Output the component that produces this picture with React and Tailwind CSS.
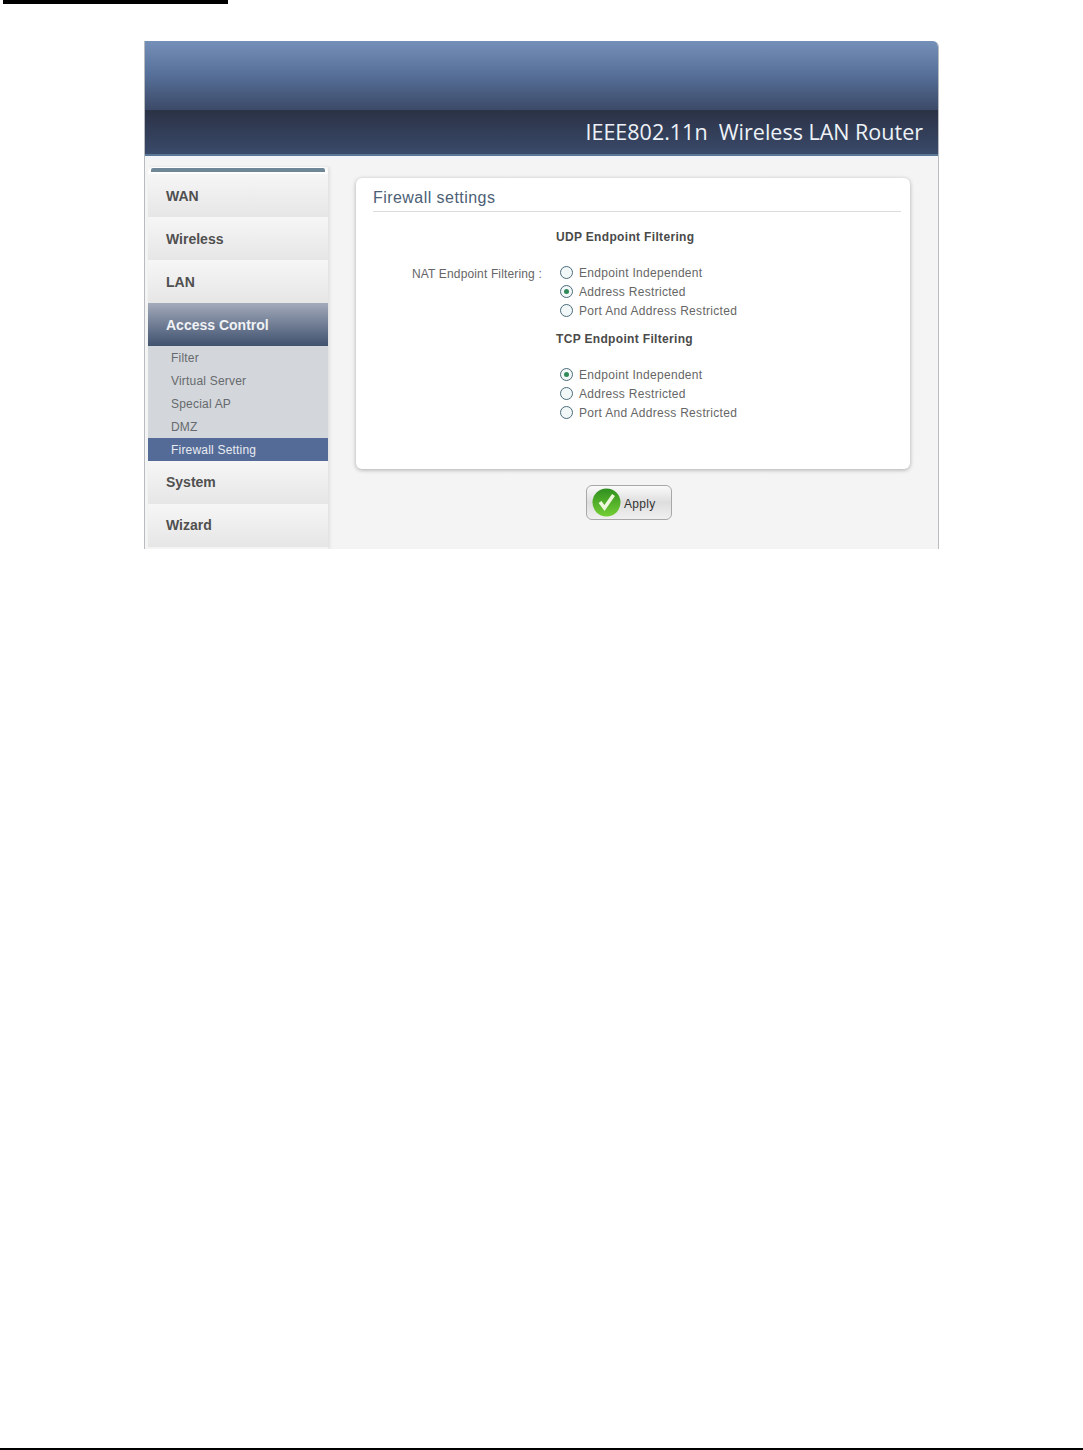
const font = { fontFamily: "Arial" };

const NavItem = ({ label, low }) => (
  <div
    className={
      low
        ? "h-[43px] flex items-center pl-[18px] pt-[1px] bg-gradient-to-b from-[#f6f6f6] to-[#e6e6e6] text-[14px] font-bold text-[#505050]"
        : "h-[43px] flex items-center pl-[18px] bg-gradient-to-b from-[#f6f6f6] to-[#e6e6e6] text-[14px] font-bold text-[#505050]"
    }
  >
    {label}
  </div>
);

const SubItem = ({ label, active }) => (
  <div
    className={
      active
        ? "h-[23px] flex items-center pl-[23px] bg-[#546b98] text-[12px] tracking-[0.2px] text-[#e8ebf0]"
        : "h-[23px] flex items-center pl-[23px] text-[12px] tracking-[0.2px] text-[#666a6e]"
    }
  >
    {label}
  </div>
);

const Radio = ({ label, checked }) => (
  <div className="h-[19px] flex items-center pl-[4px] gap-[6px]">
    <span className="w-[13px] h-[13px] rounded-full border border-[#4a6a7a] bg-[#f2f8f8] flex items-center justify-center">
      {checked && <span className="w-[5px] h-[5px] rounded-full bg-[#2f8a5a]" />}
    </span>
    <span className="text-[12px] tracking-[0.3px] text-[#666]">{label}</span>
  </div>
);

const Group = ({ title, options }) => (
  <div>
    <div className="h-[17px] flex items-center text-[12px] font-bold tracking-[0.33px] text-[#4a4a4a]">{title}</div>
    <div className="mt-[18px]">
      {options.map((o) => (
        <Radio key={o.label} label={o.label} checked={o.checked} />
      ))}
    </div>
  </div>
);

export default function App() {
  return (
    <div className="w-[1083px] h-[1450px] bg-white flex flex-col" style={font}>
      <div className="ml-[3px] w-[225px] h-[4px] bg-black" />

      <div className="ml-[144px] mt-[37px] w-[795px] h-[508px] flex flex-col border-x border-[#b8bcc0] rounded-tr-[6px] overflow-hidden">
        <div className="h-[115px] shrink-0 flex flex-col">
          <div className="h-[69px] bg-gradient-to-b from-[#7590b8] via-[#566f98] to-[#3c4a68]" />
          <div className="h-[46px] flex items-center justify-end pr-[15px] bg-gradient-to-b from-[#2b3246] to-[#3a4a6a] border-b-2 border-[#5a7896] text-[21.5px] text-[#eef2f6]" style={{ fontFamily: "'Open Sans', sans-serif" }}>
            IEEE802.11n&nbsp; Wireless LAN Router
          </div>
        </div>

        <div className="flex-1 flex bg-gradient-to-b from-[#f0f4f8] to-[#f4f4f4] to-[4px] pl-[3px]">
          <div className="w-[180px] mt-[11px] shrink-0 flex flex-col shadow-[2px_0_3px_rgba(0,0,0,0.08)]">
            <div className="h-[7px] bg-white pt-[1px] px-[3px] rounded-t-[6px]">
              <div className="h-[4px] bg-[#6f8796] rounded-t-[2px]" />
            </div>
            <NavItem label="WAN" low />
            <NavItem label="Wireless" low />
            <NavItem label="LAN" low />
            <div className="h-[43px] flex items-center pl-[18px] pt-[1px] bg-gradient-to-b from-[#a4abbb] to-[#41526f] text-[14px] font-bold text-[#f0f2f5]">
              Access Control
            </div>
            <div className="bg-[#d3d6da]">
              <SubItem label="Filter" />
              <SubItem label="Virtual Server" />
              <SubItem label="Special AP" />
              <SubItem label="DMZ" />
              <SubItem label="Firewall Setting" active />
            </div>
            <NavItem label="System" />
            <NavItem label="Wizard" />
          </div>

          <div className="w-[554px] ml-[28px] mt-[22px] flex flex-col items-center">
            <div className="w-full h-[291px] bg-white rounded-[6px] shadow-[0_1px_4px_rgba(0,0,0,0.3)] pt-[9px] pl-[17px] pr-[9px]">
              <div className="h-[25px] flex items-center pb-[2px] border-b border-[#dcdcdc] text-[16px] tracking-[0.45px] text-[#4c6075]">
                Firewall settings
              </div>
              <div className="flex mt-[16px]">
                <div className="w-[183px] pt-[37px] pl-[39px] text-[12px] tracking-[0.15px] text-[#666] whitespace-nowrap">
                  NAT Endpoint Filtering :
                </div>
                <div className="flex flex-col gap-[10px]">
                  <Group
                    title="UDP Endpoint Filtering"
                    options={[
                      { label: "Endpoint Independent" },
                      { label: "Address Restricted", checked: true },
                      { label: "Port And Address Restricted" },
                    ]}
                  />
                  <Group
                    title="TCP Endpoint Filtering"
                    options={[
                      { label: "Endpoint Independent", checked: true },
                      { label: "Address Restricted" },
                      { label: "Port And Address Restricted" },
                    ]}
                  />
                </div>
              </div>
            </div>

            <div className="mt-[16px] mr-[8px] w-[86px] h-[35px] flex items-center gap-[2px] pl-[5px] rounded-[6px] border border-[#a8a8a8] bg-gradient-to-b from-[#fafafa] via-[#dedede] to-[#f0f0f0]">
              <svg width="29" height="29" viewBox="0 0 29 29">
                <defs>
                  <linearGradient id="applyGreen" x1="0" y1="0" x2="0" y2="1">
                    <stop offset="0" stopColor="#2f8f1f" />
                    <stop offset="1" stopColor="#74cf35" />
                  </linearGradient>
                </defs>
                <circle cx="14.5" cy="14.5" r="14" fill="url(#applyGreen)" />
                <path d="M8 14 L12.5 20 L21.5 7" fill="none" stroke="#eef8dc" strokeWidth="3.5" />
              </svg>
              <span className="pt-[2px] text-[12px] tracking-[0.3px] text-[#333] ml-[1px]">Apply</span>
            </div>
          </div>
        </div>
      </div>

      <div className="mt-auto h-[2px] bg-black" />
    </div>
  );
}
